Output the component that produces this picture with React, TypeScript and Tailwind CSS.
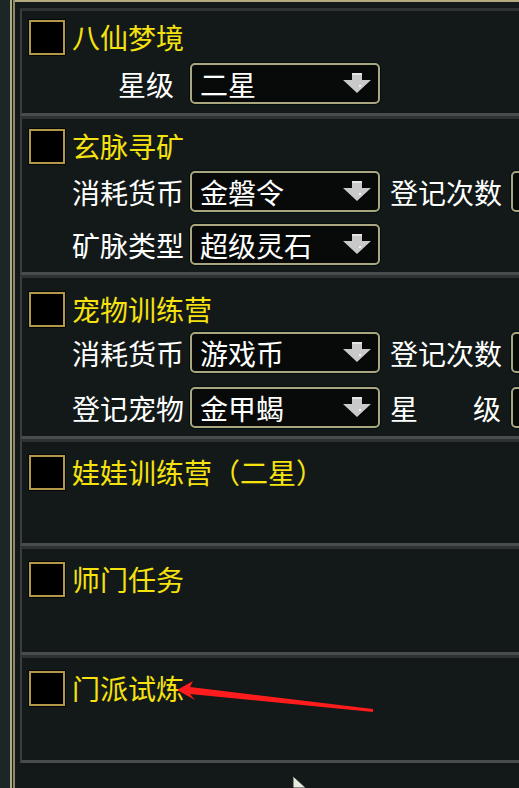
import type { ReactNode } from 'react'

const FONT = "font-['Noto_Sans_CJK_SC',sans-serif]"

function Checkbox() {
  return (
    <div className="h-[35px] w-[36px] shrink-0 border-2 border-[#b4984a] bg-black shadow-[0_0_0_1px_#050707]" />
  )
}

function DownArrow() {
  return (
    <svg width="30" height="21" viewBox="0 0 30 21">
      <polygon points="11,1 21,1 21,8 30,8 16,21 2,8 11,8" fill="#050505" />
      <polygon points="10,0 20,0 20,7 29,7 15,20 1,7 10,7" fill="#c9c9c9" />
      <polygon points="10,0 20,0 20,2 10,2" fill="#e6e6e6" />
      <rect x="17" y="12" width="2" height="2" fill="#f2f2f2" />
    </svg>
  )
}

function Select({ value }: { value?: string }) {
  return (
    <div className="flex h-[41px] w-[190px] shrink-0 items-center justify-between rounded-[5px] border-2 border-[#aaa67f] bg-[#070a09] pl-[8px] pr-[6px] shadow-[0_0_0_1px_#02100f]">
      <span className="text-[28px] leading-none text-white">{value}</span>
      <DownArrow />
    </div>
  )
}

function Title({ text }: { text: string }) {
  return (
    <div className="flex items-center">
      <Checkbox />
      <span className="ml-[7px] pb-[2px] text-[28px] leading-none text-[#f6e20f]">{text}</span>
    </div>
  )
}

function Label({ children }: { children: ReactNode }) {
  return <span className="w-[118px] shrink-0 text-[28px] leading-none text-white">{children}</span>
}

function Section({ h, pt, children }: { h: string; pt: string; children: ReactNode }) {
  return (
    <div
      className={`box-content border-t-[3px] border-b-[3px] border-l-2 border-t-[#2e3232] border-b-[#494c4c] border-l-[#3a3e3e] pl-[7px] ${h} ${pt}`}
    >
      {children}
    </div>
  )
}

export default function App() {
  return (
    <div className={`relative flex h-[788px] w-[519px] overflow-hidden bg-[#121918] ${FONT}`}>
      {/* left decorative frame */}
      <div className="w-[10px] shrink-0 bg-[#1b2626]" />
      <div className="w-[2px] shrink-0 bg-[#b2aa80]" />
      <div className="w-[1px] shrink-0 bg-[#161c1a]" />
      <div className="w-[2px] shrink-0 bg-[#8e8968]" />

      <div className="flex min-w-0 flex-1 flex-col">
        <div className="h-[2px] bg-[#b2aa80]" />
        <div className="h-[6px]" />
        <div className="w-[600px] pl-[5px]">
          {/* 八仙梦境 */}
          <Section h="h-[93px]" pt="pt-[9px]">
            <Title text="八仙梦境" />
            <div className="mt-[8px] flex items-center pl-[43px]">
              <Label>
                <span className="pl-[46px]">星级</span>
              </Label>
              <Select value="二星" />
            </div>
          </Section>

          {/* 玄脉寻矿 */}
          <Section h="h-[143px]" pt="pt-[10px]">
            <Title text="玄脉寻矿" />
            <div className="mt-[7px] flex items-center pl-[43px]">
              <Label>消耗货币</Label>
              <Select value="金磐令" />
              <span className="ml-[10px] w-[121px] shrink-0 text-[28px] leading-none text-white">登记次数</span>
              <Select />
            </div>
            <div className="mt-[12px] flex items-center pl-[43px]">
              <Label>矿脉类型</Label>
              <Select value="超级灵石" />
            </div>
          </Section>

          {/* 宠物训练营 */}
          <Section h="h-[144px]" pt="pt-[14px]">
            <Title text="宠物训练营" />
            <div className="mt-[5px] flex items-center pl-[43px]">
              <Label>消耗货币</Label>
              <Select value="游戏币" />
              <span className="ml-[10px] w-[121px] shrink-0 text-[28px] leading-none text-white">登记次数</span>
              <Select />
            </div>
            <div className="mt-[14px] flex items-center pl-[43px]">
              <Label>登记宠物</Label>
              <Select value="金甲蝎" />
              <span className="ml-[10px] flex w-[111px] shrink-0 justify-between text-[28px] leading-none text-white">
                <span>星</span>
                <span>级</span>
              </span>
              <span className="w-[10px] shrink-0" />
              <Select />
            </div>
          </Section>

          {/* 娃娃训练营 */}
          <Section h="h-[88px]" pt="pt-[13px]">
            <Title text="娃娃训练营（二星）" />
          </Section>

          {/* 师门任务 */}
          <Section h="h-[90px]" pt="pt-[13px]">
            <Title text="师门任务" />
          </Section>

          {/* 门派试炼 */}
          <Section h="h-[89px]" pt="pt-[13px]">
            <Title text="门派试炼" />
          </Section>
        </div>
      </div>

      {/* annotation arrow + mouse cursor */}
      <svg className="pointer-events-none absolute left-0 top-0" width="519" height="788" viewBox="0 0 519 788">
        <polygon
          points="177,690 193,681 190,687 373,709 373,712 190,694 195,700"
          fill="#ff1c1c"
        />
        <polygon points="293,776 306,788 293,788" fill="#e8eadf" stroke="#1c2a24" strokeWidth="1" />
      </svg>
    </div>
  )
}
